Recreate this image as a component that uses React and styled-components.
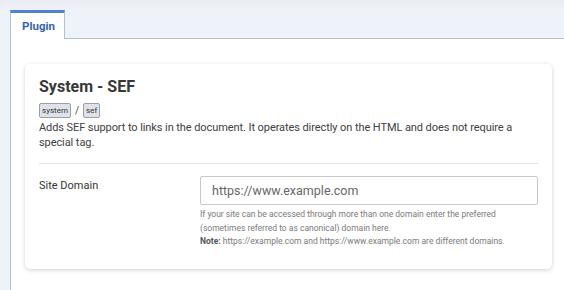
import React from "react";
import styled, { createGlobalStyle } from "styled-components";

const GlobalStyle = createGlobalStyle`
    html, body {
        margin: 0;
        padding: 0;
        background: #eef2f9;
        font-family: Roboto, "Liberation Sans", sans-serif;
    }
`;

const Page = styled.div`
    height: 290px;
    overflow: hidden;
    padding: 10px 0 0 10px;
    box-sizing: border-box;
    background: linear-gradient(#e9ecf1 0, #eef2f9 10px);
`;

const TabBar = styled.div`
    display: flex;
`;

const Tab = styled.div`
    box-sizing: border-box;
    height: 29px;
    padding: 0 9px 0 11px;
    display: flex;
    align-items: center;
    background: #fff;
    border-top: 3px solid #4f84cc;
    border-left: 1px solid #b3c0d3;
    border-right: 1px solid #b3c0d3;
    color: #3465b0;
    font-size: 11.5px;
    font-weight: 700;
    margin-bottom: -1px;
    position: relative;
    z-index: 1;
`;

const Panel = styled.div`
    background: #fff;
    border-top: 1px solid #b3c0d3;
    border-left: 1px solid #b3c0d3;
    padding: 25px 11px 30px 14px;
    height: 260px;
`;

const Card = styled.div`
    width: 527px;
    box-sizing: border-box;
    background: #fff;
    border-radius: 5px;
    box-shadow: 0 1px 4px rgba(0, 0, 0, 0.18);
    padding: 12px 14px 20px 14px;
`;

const Title = styled.h2`
    margin: 0 0 5px 0;
    font-size: 16px;
    font-weight: 700;
    color: #383838;
    line-height: 22px;
`;

const Tags = styled.div`
    display: flex;
    align-items: center;
    gap: 4px;
    font-size: 10px;
    color: #444;
`;

const Tag = styled.span`
    display: inline-block;
    box-sizing: border-box;
    height: 15px;
    line-height: 13px;
    padding: 0 2px;
    font-size: 8px;
    background: #dfe2e8;
    border: 1px solid #9aa0a8;
    border-radius: 2px;
    color: #333;
`;

const Description = styled.p`
    margin: 2px 0 0 0;
    font-size: 11px;
    line-height: 15px;
    letter-spacing: -0.08px;
    color: #404040;
`;

const Divider = styled.hr`
    border: 0;
    border-top: 1px solid #e3e3e3;
    margin: 13px 0 12px 0;
`;

const FieldRow = styled.div`
    display: grid;
    grid-template-columns: 161px 1fr;
`;

const Label = styled.label`
    font-size: 11px;
    line-height: 13px;
    color: #333;
    padding-top: 3px;
`;

const Input = styled.input`
    box-sizing: border-box;
    width: 338px;
    height: 29px;
    border: 1px solid #c8c8c8;
    border-radius: 2px;
    padding: 0 11px;
    font-family: Roboto, "Liberation Sans", sans-serif;
    font-size: 12.5px;
    color: #333;
    outline: none;
    &::placeholder {
        color: #666;
    }
`;

const Help = styled.div`
    margin-top: 3px;
    font-size: 8.5px;
    line-height: 13.5px;
    color: #7a7a7a;
    b {
        color: #555;
        font-weight: 700;
    }
`;

const App = () => {
    return (
        <>
            <GlobalStyle />
            <Page>
                <TabBar>
                    <Tab>Plugin</Tab>
                </TabBar>
                <Panel>
                    <Card>
                        <Title>System - SEF</Title>
                        <Tags>
                            <Tag>system</Tag>
                            <span>/</span>
                            <Tag>sef</Tag>
                        </Tags>
                        <Description>
                            Adds SEF support to links in the document. It operates directly on the HTML and does not require a special tag.
                        </Description>
                        <Divider />
                        <FieldRow>
                            <Label>Site Domain</Label>
                            <div>
                                <Input type="text" placeholder="https://www.example.com" />
                                <Help>
                                    If your site can be accessed through more than one domain enter the preferred (sometimes referred to as canonical) domain here.
                                    <br />
                                    <b>Note:</b> https://example.com and https://www.example.com are different domains.
                                </Help>
                            </div>
                        </FieldRow>
                    </Card>
                </Panel>
            </Page>
        </>
    );
};

export default App;
